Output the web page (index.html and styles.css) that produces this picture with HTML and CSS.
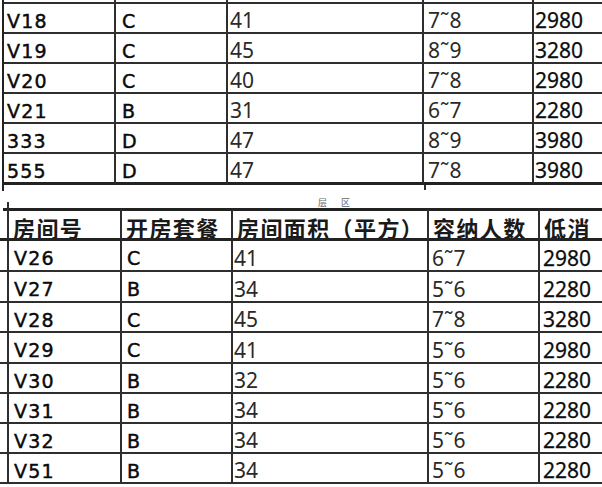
FILE: index.html
```html
<!DOCTYPE html>
<html lang="zh">
<head>
<meta charset="utf-8">
<title>房间表</title>
<link rel="stylesheet" href="styles.css">
</head>
<body>
<div class="page">
  <div class="sheet top">
    <div class="c"></div><div class="c"></div><div class="c"></div><div class="c"></div><div class="c"></div>

    <div class="c k">V18</div><div class="c k k2">C</div><div class="c n">41</div><div class="c n r">7˜8</div><div class="c p">2980</div>
    <div class="c k">V19</div><div class="c k k2">C</div><div class="c n">45</div><div class="c n r">8˜9</div><div class="c p">3280</div>
    <div class="c k">V20</div><div class="c k k2">C</div><div class="c n">40</div><div class="c n r">7˜8</div><div class="c p">2980</div>
    <div class="c k">V21</div><div class="c k k2">B</div><div class="c n">31</div><div class="c n r">6˜7</div><div class="c p">2280</div>
    <div class="c k">333</div><div class="c k k2">D</div><div class="c n">47</div><div class="c n r">8˜9</div><div class="c p">3980</div>
    <div class="c k last">555</div><div class="c k k2 last">D</div><div class="c n last">47</div><div class="c n r last">7˜8</div><div class="c p last">3980</div>
  </div>

  <div class="gap"><span class="ghost">层区</span></div>

  <div class="sheet bottom">
    <div class="c x h hx"></div><div class="c h">房间号</div><div class="c h">开房套餐</div><div class="c h">房间面积（平方）</div><div class="c h">容纳人数</div><div class="c h">低消</div>

    <div class="c x"></div><div class="c k">V26</div><div class="c k k2">C</div><div class="c n">41</div><div class="c n r">6˜7</div><div class="c p">2980</div>
    <div class="c x"></div><div class="c k">V27</div><div class="c k k2">B</div><div class="c n">34</div><div class="c n r">5˜6</div><div class="c p">2280</div>
    <div class="c x"></div><div class="c k">V28</div><div class="c k k2">C</div><div class="c n">45</div><div class="c n r">7˜8</div><div class="c p">3280</div>
    <div class="c x"></div><div class="c k">V29</div><div class="c k k2">C</div><div class="c n">41</div><div class="c n r">5˜6</div><div class="c p">2980</div>
    <div class="c x"></div><div class="c k">V30</div><div class="c k k2">B</div><div class="c n">32</div><div class="c n r">5˜6</div><div class="c p">2280</div>
    <div class="c x"></div><div class="c k">V31</div><div class="c k k2">B</div><div class="c n">34</div><div class="c n r">5˜6</div><div class="c p">2280</div>
    <div class="c x"></div><div class="c k">V32</div><div class="c k k2">B</div><div class="c n">34</div><div class="c n r">5˜6</div><div class="c p">2280</div>
    <div class="c x"></div><div class="c k">V51</div><div class="c k k2">B</div><div class="c n">34</div><div class="c n r">5˜6</div><div class="c p">2280</div>
  </div>
</div>
</body>
</html>
```

FILE: styles.css
```css
html, body {
  margin: 0;
  padding: 0;
  background: #ffffff;
  overflow: hidden;
}

.page {
  width: 602px;
  height: 487px;
  overflow: hidden;
}

.sheet {
  display: grid;
  width: max-content;
}

.c {
  box-sizing: border-box;
  border-right: 2px solid #2e2e2e;
  border-bottom: 2px solid #2e2e2e;
  display: flex;
  align-items: center;
  white-space: nowrap;
  overflow: hidden;
}

/* top table */
.top {
  margin-top: -26px;
  margin-left: 2px;
  border-left: 2px solid #222;
  grid-template-columns: 112px 112px 196px 110px 120px;
  grid-template-rows: repeat(6, 30px) 31px;
}

.top .last {
  border-bottom: 3px solid #222;
}

/* key columns: room number and package */
.k {
  font-family: "DejaVu Sans", "Noto Sans CJK SC", sans-serif;
  font-size: 19px;
  line-height: 1;
  letter-spacing: 1.2px;
  color: #0a0a0a;
  -webkit-text-stroke: 0.45px #0a0a0a;
  padding: 6px 0 0 3px;
}

.k2 {
  padding-left: 6px;
}

/* numeric columns */
.n {
  font-family: "Noto Sans", "Noto Sans CJK SC", sans-serif;
  font-size: 21px;
  line-height: 1;
  color: #2a2a2a;
  padding: 5px 0 0 2px;
}

.r {
  padding-left: 4px;
}

.p {
  font-family: "Noto Sans", "Noto Sans CJK SC", sans-serif;
  font-size: 21px;
  line-height: 1;
  color: #0d0d0d;
  padding: 5px 0 0 1px;
  -webkit-text-stroke: 0.25px #0d0d0d;
}

/* gap between the two tables, with the stray tick marks */
.gap {
  height: 23px;
  box-sizing: border-box;
  padding: 13px 0 0 318px;
  background:
    linear-gradient(#222, #222) 2px 0 / 2px 6px no-repeat,
    linear-gradient(#2e2e2e, #2e2e2e) 424px 0 / 2px 5px no-repeat,
    linear-gradient(#2e2e2e, #2e2e2e) 7px 17px / 2px 6px no-repeat;
}

.ghost {
  display: block;
  width: 60px;
  font-family: "Noto Sans CJK SC", sans-serif;
  font-size: 9px;
  line-height: 9px;
  letter-spacing: 14px;
  color: #666;
}

/* bottom table */
.bottom {
  grid-template-columns: 9px 113px 111px 196px 111px 130px;
  grid-template-rows: 33px 31px 31px 30px 31px 30px 30px 30px 30px;
}

.x {
  border-right: 2px solid #2e2e2e;
}

.h {
  border-top: 3px solid #222;
  border-bottom: 3px solid #222;
  font-family: "Noto Sans CJK SC", sans-serif;
  font-weight: bold;
  font-size: 22px;
  line-height: 1;
  letter-spacing: 1.4px;
  color: #1a1a1a;
  padding: 4px 0 0 4px;
}

.hx {
  border-top: 0;
  padding: 0;
  background: linear-gradient(#222, #222) 3px 0 / 4px 3px no-repeat;
}

.bottom .k {
  padding-left: 5px;
}

.bottom .k2 {
  padding-left: 5px;
}

.bottom .n {
  padding-left: 1px;
}

.bottom .r {
  padding-left: 3px;
}

.bottom .p {
  padding-left: 3px;
}
```
